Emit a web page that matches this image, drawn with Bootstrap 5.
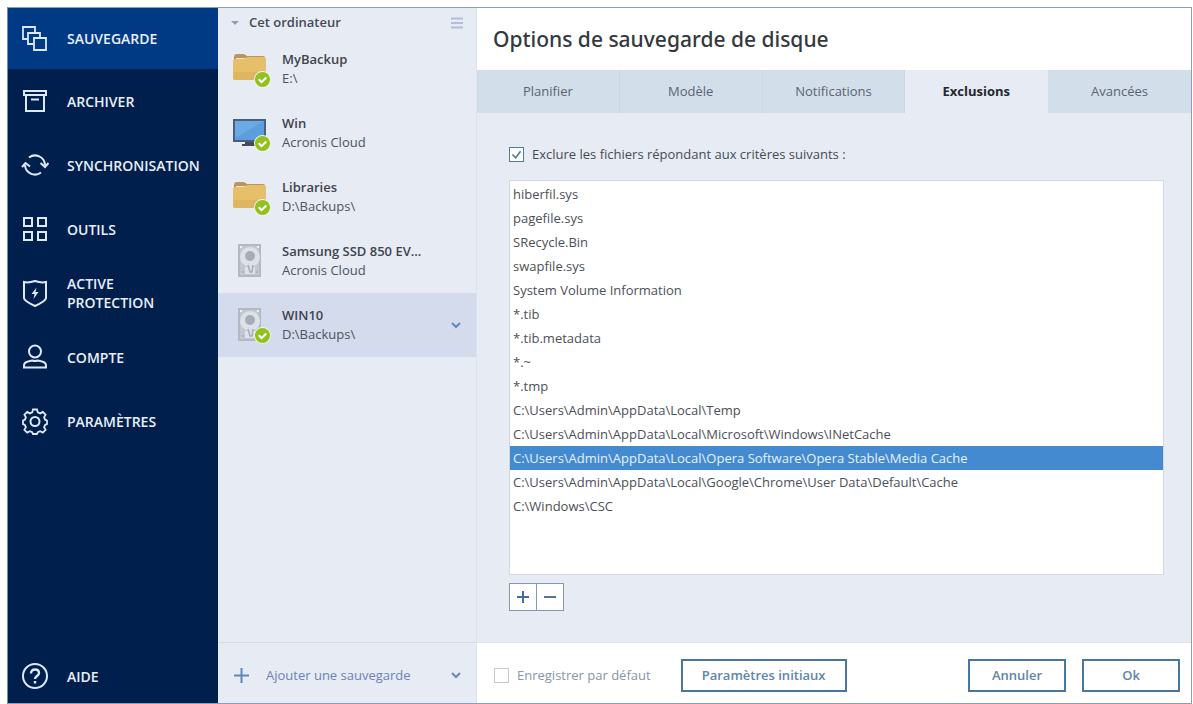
<!DOCTYPE html>
<html lang="fr">
<head>
<meta charset="utf-8">
<meta name="viewport" content="width=device-width, initial-scale=1">
<title>Options de sauvegarde de disque</title>
<link href="https://cdn.jsdelivr.net/npm/bootstrap@5.3.0/dist/css/bootstrap.min.css" rel="stylesheet">
<style>
body { font-family: "Open Sans", "Noto Sans", sans-serif; font-size: 13px; line-height: 19px; color: #454b55; background: #fff; }
.app-window { border: 1px solid #8d9db5; border-left-color: #6f8fb8; background: #e7ebf3; }
.page-frame { padding: 7px 1px 0 7px; }

/* main navigation */
.app-nav { width: 210px; background: #001f4d; }
.app-nav a { min-height: 64px; padding: 0 8px 0 13px; gap: 18px; color: #e9eff8; font-size: 14px; font-weight: 600; }
.app-nav a.active { background: #003a85; min-height: 61px; }
.app-nav svg { width: 28px; height: 28px; flex: none; fill: none; stroke: #dce9f8; stroke-width: 2; }
.app-nav .help-link { min-height: 54px; }

/* backups */
.backup-pane { width: 259px; border-right: 1px solid #dde3ee; background: #e7ebf3; }
.pane-head { height: 29px; padding: 0 12px 0 11px; font-weight: 600; }
.backup-entry { min-height: 64px; padding: 0 14px 0 15px; gap: 11px; color: #4d535e; text-align: left; background: none; border: 0; }
.backup-entry.active { background: #d3dbec; }
.backup-entry strong { display: block; font-weight: 600; color: #3e444e; }
.backup-entry .entry-icon { width: 38px; height: 38px; flex: none; }
.pane-foot { height: 61px; border-top: 1px solid #d5dbe6; padding: 4px 14px 0 15px; color: #6c82b3; background: #e7ebf3; }
.pane-foot button, .pane-head button { color: inherit; background: none; border: 0; padding: 0; font-weight: inherit; }

/* options */
.options-head { height: 62px; padding-left: 16px; background: #fff; }
.options-head h1 { font-family: "Noto Sans", "Open Sans", sans-serif; font-size: 21px; line-height: 28px; font-weight: 500; color: #343840; }
.option-tabs { background: #d3deeb; }
.option-tabs .nav-link { height: 43px; padding: 0; color: #5a6470; background: #d3deeb; border: 0; border-right: 1px solid #cad6e4; border-radius: 0; }
.option-tabs .nav-item:last-child .nav-link { border-right: 0; }
.option-tabs .nav-link.active { background: #e7ebf3; color: #23272e; font-weight: 700; border-right-color: #e7ebf3; }
.options-body { padding: 32px 27px 31px 32px; }
.form-check-input.box-check { width: 15px; height: 15px; margin: 0; flex: none; border: 1px solid #4d7ba3; border-radius: 0; background-color: #fff; }
.box-check:checked { background-color: #fff; background-image: url("data:image/svg+xml,%3Csvg xmlns='http://www.w3.org/2000/svg' viewBox='0 0 16 16'%3E%3Cpath d='M3 8l4 4 6-8' fill='none' stroke='%234d7ba3' stroke-width='2'/%3E%3C/svg%3E"); }
.form-check-input.box-muted { border-color: #c5c9ce; }
.exclusion-list { background: #fff; border: 1px solid #d3d8e0; border-radius: 0; margin-top: 16px; padding-top: 1px; }
.exclusion-list .list-group-item { height: 24px; padding: 0 3px; border: 0; color: #4c5058; line-height: 24px; background: none; }
.exclusion-list .list-group-item.active { margin-top: 0; background: #438ad0; color: #e6f2ff; }
.edit-btn { width: 28px; height: 28px; padding: 0; border: 1px solid #7f98bb; border-radius: 0; background: #fff; line-height: 0; }
.edit-btn + .edit-btn { margin-left: -1px; }
.options-foot { height: 61px; padding: 4px 11px 0 17px; background: #fff; color: #8794ac; border-top: 1px solid #dfe4ec; }
.action-btn { height: 33px; width: 98px; padding: 0; border: 2px solid #4a759d; border-radius: 0; background: #fff; color: #5f84ac; font-size: 13px; font-weight: 600; }
.action-wide { width: 166px; margin-left: 30px; }
</style>
<script src="https://cdn.jsdelivr.net/npm/bootstrap@5.3.0/dist/js/bootstrap.bundle.min.js"></script>
</head>
<body>
<svg class="d-none" aria-hidden="true">
  <symbol id="ok-badge" viewBox="0 0 18 18"><circle cx="9" cy="9" r="9" fill="#eef3ea"/><circle cx="9" cy="9" r="8" fill="#93c01f"/><path d="M5 8.800l3 3 5-5" fill="none" stroke="#fff" stroke-width="2.200"/></symbol>
  <symbol id="folder" viewBox="0 0 38 38"><path d="M1 7q0-3 3-3h7l3 2h16q2 0 2 2v4H1z" fill="#b99660"/><path d="M3 8h28v5H3z" fill="#f6ead0"/><path d="M0 11q0-2 2-2h9l3-2h17q2 0 2 2v19q0 2-2 2H2q-2 0-2-2z" fill="#e7bf6b"/><path d="M0 22h33v6q0 2-2 2H2q-2 0-2-2z" fill="#dfb562"/><use href="#ok-badge" x="21" y="21" width="17" height="17"/></symbol>
  <symbol id="monitor" viewBox="0 0 38 38"><path d="M0 5h33v23H0z" fill="#4b5f7c"/><path d="M2 7h29v19H2z" fill="#5c9ddd"/><path d="M2 7h29L2 24z" fill="#6caae5"/><path d="M12 28h9v2h3v2H9v-2h3z" fill="#444b56"/><use href="#ok-badge" x="21" y="21" width="17" height="17"/></symbol>
  <symbol id="drive" viewBox="0 0 38 38"><path d="M5 2h23v33H5z" fill="#b3b9c3"/><path d="M7 4h19v29H7z" fill="#c2c7d0"/><circle cx="17" cy="15" r="10" fill="#dde1e8"/><circle cx="17" cy="14" r="5" fill="#a6acb8"/><path d="M12 25h10v7H12z" fill="#dde1e8"/><path d="M15 23l2 7h2l1-7M9 30h2M23 30h2" stroke="#a6acb8" stroke-width="1.500" fill="none"/><path d="M7 5h2M24 5h2" stroke="#fff" stroke-width="1.500"/></symbol>
  <symbol id="chevron" viewBox="0 0 12 12"><path d="M2 4l4 4 4-4" fill="none" stroke="currentColor" stroke-width="2"/></symbol>
</svg>

<div class="page-frame min-vh-100 d-flex">
<div class="app-window d-flex flex-grow-1">

  <nav class="app-nav d-flex flex-column flex-shrink-0" aria-label="Navigation principale">
    <a href="#" class="active d-flex align-items-center text-decoration-none" aria-current="page">
      <svg viewBox="0 0 28 28"><path d="M7 14H2V2h12v5M12 19H7V8h12v4M13 13h12v12H13z" stroke-width="1.800"/></svg>SAUVEGARDE</a>
    <a href="#" class="d-flex align-items-center text-decoration-none">
      <svg viewBox="0 0 28 28"><path d="M3 4h22v4H3zM5 8v16h18V8M10 12.500h8"/></svg>ARCHIVER</a>
    <a href="#" class="d-flex align-items-center text-decoration-none">
      <svg viewBox="0 0 28 28"><path d="M8 6.500A10 10 0 0 1 24 14M20 21.500A10 10 0 0 1 4 14M1 16l3.500-4L9 15.500M19.500 12l4.500 4 3.500-4"/></svg>SYNCHRONISATION</a>
    <a href="#" class="d-flex align-items-center text-decoration-none">
      <svg viewBox="0 0 28 28"><path d="M3 3h8v8H3zM17 3h8v8h-8zM3 17h8v8H3zM17 17h8v8h-8z"/></svg>OUTILS</a>
    <a href="#" class="d-flex align-items-center text-decoration-none">
      <svg viewBox="0 0 28 28"><path d="M3 3c4 1 8 0 11-1 3 1 7 2 11 1v16c0 2-6 6-11 8-5-2-11-6-11-8z"/><path d="M15.500 8.500l-5 6.500h3l-1 5 5-7h-3z" fill="#dce9f8" stroke="none"/></svg><span>ACTIVE<br>PROTECTION</span></a>
    <a href="#" class="d-flex align-items-center text-decoration-none">
      <svg viewBox="0 0 28 28"><circle cx="14" cy="8.500" r="6"/><path d="M3 24.500v-2q0-3 4-4l4-1q3 1 6 0l4 1q4 1 4 4v2z"/></svg>COMPTE</a>
    <a href="#" class="d-flex align-items-center text-decoration-none">
      <svg viewBox="0 0 28 28"><path d="M12 2.500h4l.8 2.900 2.400 1 2.600-1.500 2.800 2.800-1.500 2.600 1 2.400 1.900.8v3.600l-1.900.8-1 2.400 1.500 2.600-2.800 2.800-2.600-1.500-2.400 1-.8 1.800h-4l-.8-1.800-2.400-1-2.600 1.500-2.800-2.800 1.500-2.600-1-2.400-1.900-.8v-3.600l1.900-.8 1-2.400-1.500-2.600 2.800-2.800 2.600 1.500 2.400-1z" stroke-width="1.800"/><circle cx="14" cy="14.500" r="4.500"/></svg>PARAMÈTRES</a>
    <a href="#" class="help-link mt-auto d-flex align-items-center text-decoration-none">
      <svg viewBox="0 0 28 28"><circle cx="14" cy="14" r="12"/><path d="M10 11.500q0-4 4-4t4 3.500c0 3-4 3-4 6M14 19v2.500" stroke-width="2.400"/></svg>AIDE</a>
  </nav>

  <aside class="backup-pane d-flex flex-column flex-shrink-0">
    <div class="pane-head d-flex align-items-center justify-content-between">
      <button type="button" class="d-flex align-items-center gap-2"><svg width="12" height="8" viewBox="0 0 12 8"><path d="M2 2h8L6 6z" fill="#8f9fba"/></svg><span>Cet ordinateur</span></button>
      <button type="button" aria-label="Menu" class="d-flex"><svg width="14" height="12" viewBox="0 0 14 12"><path d="M1 1.500h12M1 6h12M1 10.500h12" stroke="#b1bedb" stroke-width="2"/></svg></button>
    </div>
    <button type="button" class="backup-entry d-flex align-items-center"><svg class="entry-icon"><use href="#folder"/></svg><span><strong>MyBackup</strong>E:\</span></button>
    <button type="button" class="backup-entry d-flex align-items-center"><svg class="entry-icon"><use href="#monitor"/></svg><span><strong>Win</strong>Acronis Cloud</span></button>
    <button type="button" class="backup-entry d-flex align-items-center"><svg class="entry-icon"><use href="#folder"/></svg><span><strong>Libraries</strong>D:\Backups\</span></button>
    <button type="button" class="backup-entry d-flex align-items-center"><svg class="entry-icon"><use href="#drive"/></svg><span><strong>Samsung SSD 850 EV...</strong>Acronis Cloud</span></button>
    <button type="button" class="backup-entry active d-flex align-items-center"><svg class="entry-icon" viewBox="0 0 38 38"><use href="#drive"/><use href="#ok-badge" x="21" y="21" width="17" height="17"/></svg><span><strong>WIN10</strong>D:\Backups\</span><svg class="ms-auto" width="12" height="12" color="#6486c4"><use href="#chevron"/></svg></button>
    <div class="pane-foot mt-auto d-flex align-items-center justify-content-between">
      <button type="button" class="d-flex align-items-center gap-3"><svg width="17" height="17" viewBox="0 0 17 17"><path d="M8.500 1v15M1 8.500h15" stroke="#6285bb" stroke-width="2"/></svg>Ajouter une sauvegarde</button>
      <button type="button" class="d-flex" aria-label="Autres choix"><svg width="12" height="12" color="#7185ac"><use href="#chevron"/></svg></button>
    </div>
  </aside>

  <main class="d-flex flex-column flex-grow-1">
    <header class="options-head d-flex align-items-center"><h1 class="m-0">Options de sauvegarde de disque</h1></header>
    <ul class="option-tabs nav nav-justified flex-nowrap" role="tablist">
      <li class="nav-item"><button type="button" role="tab" class="nav-link w-100">Planifier</button></li>
      <li class="nav-item"><button type="button" role="tab" class="nav-link w-100">Modèle</button></li>
      <li class="nav-item"><button type="button" role="tab" class="nav-link w-100">Notifications</button></li>
      <li class="nav-item"><button type="button" role="tab" aria-selected="true" class="nav-link active w-100">Exclusions</button></li>
      <li class="nav-item"><button type="button" role="tab" class="nav-link w-100">Avancées</button></li>
    </ul>
    <section class="options-body d-flex flex-column flex-grow-1">
      <div class="d-flex align-items-center gap-2">
        <input class="form-check-input box-check" type="checkbox" id="exclure" checked>
        <label for="exclure">Exclure les fichiers répondant aux critères suivants :</label>
      </div>
      <div class="exclusion-list list-group flex-grow-1">
        <button type="button" class="list-group-item list-group-item-action">hiberfil.sys</button>
        <button type="button" class="list-group-item list-group-item-action">pagefile.sys</button>
        <button type="button" class="list-group-item list-group-item-action">SRecycle.Bin</button>
        <button type="button" class="list-group-item list-group-item-action">swapfile.sys</button>
        <button type="button" class="list-group-item list-group-item-action">System Volume Information</button>
        <button type="button" class="list-group-item list-group-item-action">*.tib</button>
        <button type="button" class="list-group-item list-group-item-action">*.tib.metadata</button>
        <button type="button" class="list-group-item list-group-item-action">*.~</button>
        <button type="button" class="list-group-item list-group-item-action">*.tmp</button>
        <button type="button" class="list-group-item list-group-item-action">C:\Users\Admin\AppData\Local\Temp</button>
        <button type="button" class="list-group-item list-group-item-action">C:\Users\Admin\AppData\Local\Microsoft\Windows\INetCache</button>
        <button type="button" class="list-group-item list-group-item-action active">C:\Users\Admin\AppData\Local\Opera Software\Opera Stable\Media Cache</button>
        <button type="button" class="list-group-item list-group-item-action">C:\Users\Admin\AppData\Local\Google\Chrome\User Data\Default\Cache</button>
        <button type="button" class="list-group-item list-group-item-action">C:\Windows\CSC</button>
      </div>
      <div class="d-flex mt-2">
        <button type="button" class="edit-btn" aria-label="Ajouter"><svg width="14" height="14" viewBox="0 0 14 14"><path d="M7 1v12M1 7h12" stroke="#3f6ca3" stroke-width="2"/></svg></button>
        <button type="button" class="edit-btn" aria-label="Supprimer"><svg width="14" height="14" viewBox="0 0 14 14"><path d="M1 7h12" stroke="#5c7398" stroke-width="2"/></svg></button>
      </div>
    </section>
    <footer class="options-foot d-flex align-items-center">
      <input class="form-check-input box-check box-muted" type="checkbox" id="defaut">
      <label for="defaut" class="ms-2">Enregistrer par défaut</label>
      <button type="button" class="action-btn action-wide">Paramètres initiaux</button>
      <button type="button" class="action-btn ms-auto">Annuler</button>
      <button type="button" class="action-btn ms-3">Ok</button>
    </footer>
  </main>
</div>
</div>
</body>
</html>
